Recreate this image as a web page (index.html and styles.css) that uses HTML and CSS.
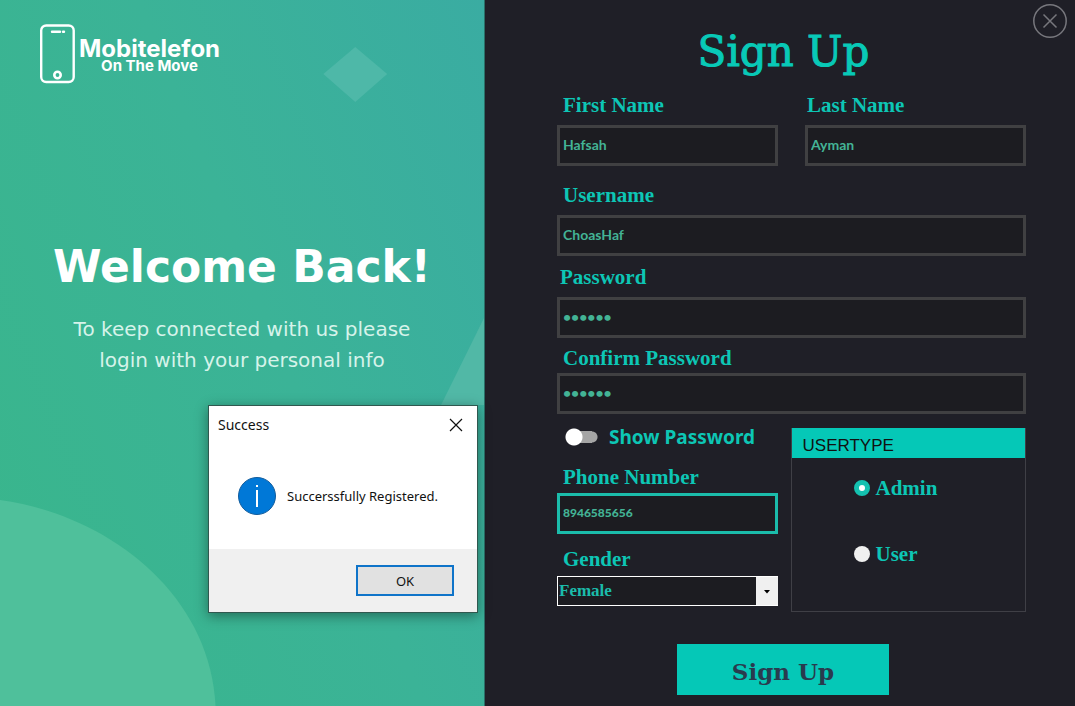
FILE: index.html
```html
<!DOCTYPE html>
<html lang="en">
<head>
<meta charset="utf-8">
<title>Mobitelefon - Sign Up</title>
<link rel="stylesheet" href="styles.css">
</head>
<body>
<main class="app">
  <section class="welcome">
    <svg class="backdrop" viewBox="0 0 485 706" preserveAspectRatio="none" aria-hidden="true">
      <path d="M356 47 388 74 356 102 324 74Z" fill="#4eb8a8"/>
      <path d="M485 318 442 405H485Z" fill="#51b8a6"/>
      <path d="M0 500C104 514 210 590 216 706H0Z" fill="#4fc09b"/>
    </svg>
    <header class="brand">
      <svg class="brand-icon" viewBox="0 0 36 60" aria-hidden="true">
        <rect x="1.200" y="1.500" width="32.500" height="56.500" rx="5" fill="none" stroke="#fff" stroke-width="2.400"/>
        <path d="M12 7.800h8M23 7.800h1" stroke="#fff" stroke-width="2.400" stroke-linecap="round"/>
        <circle cx="17.500" cy="51" r="3.200" fill="none" stroke="#fff" stroke-width="2.600"/>
      </svg>
      <div class="brand-text">
        <span class="brand-name">Mobitelefon</span>
        <span class="brand-tag">On The Move</span>
      </div>
    </header>
    <h1 class="welcome-title">Welcome Back!</h1>
    <p class="welcome-text">To keep connected with us please<br>login with your personal info</p>
  </section>

  <section class="signup">
    <button class="close" type="button" aria-label="Close">
      <svg viewBox="0 0 34 34" aria-hidden="true"><circle cx="17" cy="17" r="16.200"/><path d="M10.500 10.500l13 13M23.500 10.500l-13 13"/></svg>
    </button>
    <form class="form">
      <h2 class="form-title">Sign Up</h2>
      <div class="names">
        <div class="field"><label for="first">First Name</label><input id="first" type="text" value="Hafsah"></div>
        <div class="field"><label for="last">Last Name</label><input id="last" type="text" value="Ayman"></div>
      </div>
      <div class="field field-user"><label for="user">Username</label><input id="user" type="text" value="ChoasHaf"></div>
      <div class="field field-pass"><label for="pass">Password</label><input id="pass" type="password" value="secret"></div>
      <div class="field field-confirm"><label for="confirm">Confirm Password</label><input id="confirm" type="password" value="secret"></div>
      <div class="details">
        <div class="details-left">
          <div class="toggle"><input id="show" type="checkbox"><label for="show">Show Password</label></div>
          <div class="field field-phone"><label for="phone">Phone Number</label><input id="phone" type="text" value="8946585656"></div>
          <div class="field field-gender">
            <label for="gender">Gender</label>
            <div class="select">
              <select id="gender"><option>Female</option><option>Male</option></select>
              <svg class="select-arrow" viewBox="0 0 22 28" aria-hidden="true"><path d="M8 13h6l-3 3.500z"/></svg>
            </div>
          </div>
        </div>
        <fieldset class="usertype">
          <legend>USERTYPE</legend>
          <div class="option"><input id="admin" type="radio" name="type" checked><label for="admin">Admin</label></div>
          <div class="option"><input id="plain" type="radio" name="type"><label for="plain">User</label></div>
        </fieldset>
      </div>
      <button class="submit" type="button">Sign Up</button>
    </form>
  </section>

  <div class="dialog" role="dialog" aria-labelledby="dialog-title">
    <div class="dialog-head">
      <span id="dialog-title">Success</span>
      <button class="dialog-close" type="button" aria-label="Close"><svg viewBox="0 0 12 12" aria-hidden="true"><path d="M0 0l12 12M12 0L0 12"/></svg></button>
    </div>
    <div class="dialog-body">
      <svg class="info" viewBox="0 0 38 38" aria-hidden="true"><circle cx="19" cy="19" r="18.500" fill="#0078d7" stroke="#125c9c"/><path d="M18 13h2v17h-2zM18 8h2v2h-2z" fill="#fff"/></svg>
      <span>Succerssfully Registered.</span>
    </div>
    <div class="dialog-foot"><button class="ok" type="button">OK</button></div>
  </div>
</main>
</body>
</html>
```
FILE: styles.css
```css
* { box-sizing: border-box; }
body { margin: 0; background: #1f1f27; }
h1, h2, p { margin: 0; }
button, input, select { font: inherit; margin: 0; }

.app { position: relative; display: grid; grid-template-columns: 485fr 590fr; min-height: 100vh; }

/* Welcome side */
.welcome {
  position: relative;
  color: #fff;
  font-family: "DejaVu Sans", sans-serif;
  text-align: center;
  background: linear-gradient(68deg, #39b68b 0%, #3bb397 55%, #3aaca2 100%);
  border-right: 1px solid #2a6f67;
}
.backdrop { position: absolute; inset: 0; width: 100%; height: 100%; }
.brand { position: relative; display: flex; align-items: center; gap: 3px; padding: 24px 0 0 40px; }
.brand-icon { width: 36px; height: 60px; }
.brand-text { display: flex; flex-direction: column; font-family: Inter, sans-serif; font-weight: 700; }
.brand-name { padding-top: 4px; font-size: 24px; line-height: 20px; }
.brand-tag { font-size: 15px; line-height: 14px; }
.welcome-title { position: relative; padding-top: 158px; font-size: 44px; line-height: 50px; font-weight: 700; white-space: nowrap; }
.welcome-text { position: relative; padding-top: 22px; font-size: 20px; line-height: 31px; color: #d6f3ea; }

/* Form side */
.signup { position: relative; padding: 0 49px 11px 72px; color: #0dc6b5; }
.close { position: absolute; top: 4px; right: 8px; width: 34px; height: 34px; padding: 0; border: 0; background: none; }
.close svg { display: block; fill: none; stroke: #77777d; stroke-width: 1.500; }
.form { display: flex; flex-direction: column; font-family: "Liberation Serif", serif; font-size: 21px; line-height: 24px; font-weight: 700; }
.form-title { padding: 22px 16px 11px 0; font-family: "DejaVu Serif", serif; font-size: 42px; line-height: 60px; font-weight: 400; text-align: center; color: #08c9b7; -webkit-text-stroke: 1px #08c9b7; }
.names { display: grid; grid-template-columns: 1fr 1fr; gap: 27px; }
.field { display: flex; flex-direction: column; gap: 8px; }
.field > label { padding-left: 6px; }
.names .field:last-child > label { padding-left: 2px; }
.field > input {
  width: 100%;
  height: 41px;
  padding: 0 3px 2px;
  border: 3px solid #404042;
  border-radius: 0;
  outline: none;
  background: #1c1c21;
  color: #43b395;
  font-family: Lato, sans-serif;
  font-size: 14px;
}
.field-user { margin-top: 17px; }
.field-pass { margin-top: 9px; }
.field-pass > label { padding-left: 3px; }
.field-confirm { margin-top: 8px; gap: 3px; }
.details { display: grid; grid-template-columns: 221fr 236fr; gap: 13px; margin-top: 14px; }
.details-left { padding-bottom: 6px; }
.toggle { display: flex; align-items: center; gap: 11px; height: 18px; padding-left: 8px; white-space: nowrap; font-family: "Noto Sans", sans-serif; font-size: 19px; }
.toggle input {
  appearance: none;
  width: 33px;
  height: 18px;
  background:
    radial-gradient(circle at 9px 9px, #fff 8px, transparent 9px),
    linear-gradient(#a5a5a5, #a5a5a5) 8px 3px / 19px 12px no-repeat,
    radial-gradient(circle at 27px 9px, #a5a5a5 5px, transparent 6px);
}
.field-phone { margin-top: 19px; gap: 4px; }
.field-phone > input { border-color: #1bbcab; font-size: 12px; font-weight: 900; }
.field-gender { margin-top: 13px; gap: 5px; }
.select { position: relative; }
.select select {
  display: block;
  appearance: none;
  width: 100%;
  height: 30px;
  padding: 0 24px 0 1px;
  border: 1px solid #fff;
  border-radius: 0;
  background: #1c1c21;
  color: #1bbcab;
  font-size: 17px;
}
.select-arrow { position: absolute; top: 1px; right: 0; width: 22px; height: 28px; background: #f0f0f0; pointer-events: none; }
.usertype { min-width: 0; margin: 0; padding: 0; border: 1px solid #3f3f46; border-top: 0; }
.usertype legend { float: left; width: 100%; padding: 6px 11px 0; height: 30px; background: #05c8b7; color: #111; font-family: "Liberation Sans", sans-serif; font-size: 17px; font-weight: 400; }
.option { clear: both; display: flex; align-items: center; gap: 6px; padding: 18px 0 24px 62px; }
.option input { appearance: none; width: 16px; height: 16px; border-radius: 50%; background: #f0f0f0; }
.option input:checked { background: #fff; border: 5px solid #14c1b0; }
.submit { align-self: center; width: 212px; height: 51px; margin: 32px 17px 0 0; padding: 4px 0 0; border: 0; background: #05c8b7; color: #293b4e; font-family: "DejaVu Serif", serif; font-size: 23px; font-weight: 700; }

/* Message box */
.dialog {
  position: absolute;
  top: 405px;
  left: 208px;
  width: 270px;
  border: 1px solid #30584f;
  background: #fff;
  box-shadow: 0 3px 12px rgba(0, 0, 0, 0.4);
  color: #111;
  font-family: "Noto Sans", sans-serif;
  font-size: 13px;
}
.dialog-head { display: flex; justify-content: space-between; align-items: center; height: 37px; padding: 0 15px 0 9px; font-size: 14px; }
.dialog-close { width: 12px; height: 12px; padding: 0; border: 0; background: none; }
.dialog-close svg { display: block; overflow: visible; fill: none; stroke: #111; stroke-width: 1.200; }
.dialog-body { display: flex; align-items: center; gap: 11px; height: 106px; padding: 0 0 0 29px; white-space: nowrap; }
.info { width: 38px; height: 38px; }
.dialog-foot { display: flex; justify-content: flex-end; padding: 16px 23px; background: #f0f0f0; }
.ok { width: 98px; height: 31px; padding: 0; border: 2px solid #0f74c9; background: #e1e1e1; color: #111; }
```
